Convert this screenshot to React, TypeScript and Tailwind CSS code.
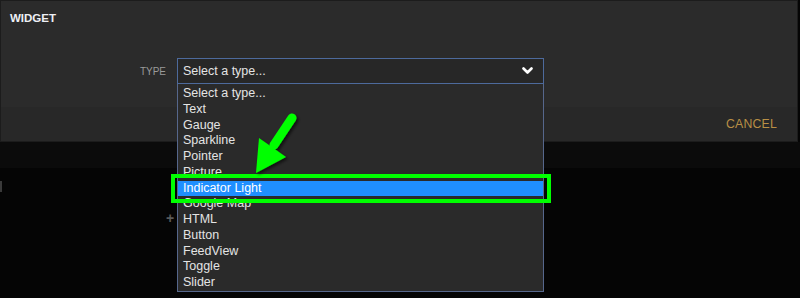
import React from "react";

const items = [
  "Select a type...",
  "Text",
  "Gauge",
  "Sparkline",
  "Pointer",
  "Picture",
  "Indicator Light",
  "Google Map",
  "HTML",
  "Button",
  "FeedView",
  "Toggle",
  "Slider",
];

export default function App() {
  return (
    <div
      className="relative w-[800px] h-[298px] overflow-hidden bg-[#050505] flex flex-col"
      style={{ fontFamily: '"Liberation Sans", Arial, sans-serif' }}
    >
      {/* modal panel */}
      <div className="h-[142px] w-[798px] flex flex-col bg-[#2b2b2b] border-t border-l border-r border-b border-[#1c1c1c]">
        <div className="h-[35px] pt-[11px] px-[9px]">
          <div className="text-[11.5px] leading-[13px] font-bold text-[#eef0f5]">WIDGET</div>
        </div>
        <div className="h-[71px] pt-[22px] flex items-start">
          <div className="w-[165px] h-[26px] flex items-center justify-end text-[10px] text-[#9a9a9a]">TYPE</div>
          <div className="relative ml-[11px] w-[367px]">
            <div className="h-[26px] border border-[#4d6a9c] bg-[#272727] flex items-center justify-between pl-[5px] pr-[10px] text-[12.5px] text-[#e4e4e4]">
              <span>Select a type...</span>
              <svg width="11" height="8" viewBox="0 0 11 8">
                <path d="M1.5 1.5 L5.5 5.5 L9.5 1.5" stroke="#ffffff" strokeWidth="2.6" fill="none" strokeLinecap="round" strokeLinejoin="round" />
              </svg>
            </div>
            <div className="absolute left-0 top-[26px] z-10 w-[367px] border border-t-0 border-[#56678c] bg-[#2a2a2a] pt-[2px]">
              {items.map((it) => (
                <div
                  key={it}
                  className={
                    it === "Indicator Light"
                      ? "h-[15.75px] leading-[15.75px] pl-[5px] text-[12.5px] bg-[#1f8fff] text-white"
                      : "h-[15.75px] leading-[15.75px] pl-[5px] text-[12.5px] text-[#e4e4e4]"
                  }
                >
                  {it}
                </div>
              ))}
            </div>
          </div>
        </div>
        <div className="flex-1 bg-[#282828] flex items-center justify-end pr-[20px]">
          <span className="text-[12.3px] text-[#b98f45] tracking-[0.2px]">CANCEL</span>
        </div>
      </div>
      <div className="h-[26px] bg-[#0b0b0b]" />
      <div className="flex-1 relative">
        <div className="absolute left-0 top-[13px] w-[2px] h-[11px] bg-[#3a3a3a]" />
        <div className="absolute left-[166px] top-[43px] text-[14px] leading-[14px] font-bold text-[#5a5a5a]">+</div>
      </div>

      {/* annotation: green box */}
      <div className="absolute left-[171px] top-[174px] w-[380px] h-[29px] border-[4px] border-[#00ff00] z-20" />
      {/* annotation: green arrow */}
      <svg className="absolute left-0 top-0 z-20" width="800" height="298" viewBox="0 0 800 298">
        <defs>
          <filter id="sh" x="-50%" y="-50%" width="200%" height="200%">
            <feDropShadow dx="2" dy="2" stdDeviation="1.5" floodColor="#000" floodOpacity="0.6" />
          </filter>
        </defs>
        <g filter="url(#sh)">
          <line x1="292" y1="118" x2="274" y2="145" stroke="#00ff00" strokeWidth="9" strokeLinecap="round" />
          <polygon points="259,138 286,157 256,173" fill="#00ff00" />
        </g>
      </svg>
    </div>
  );
}
